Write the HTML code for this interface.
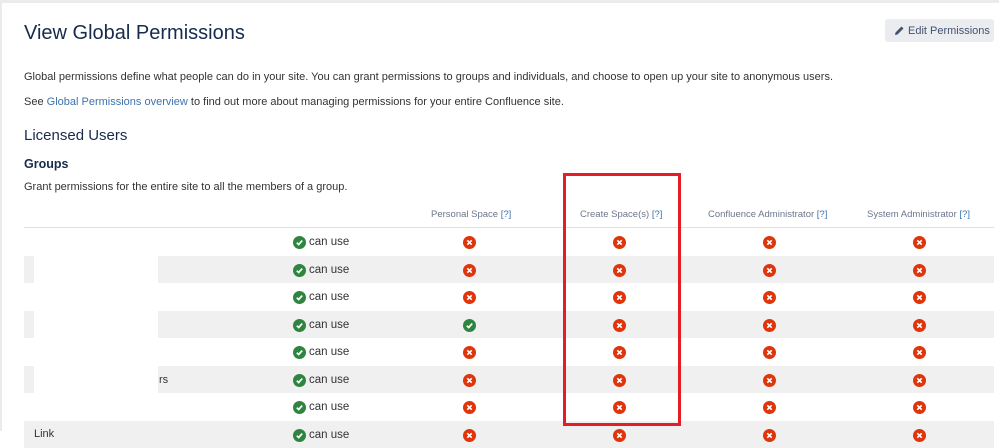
<!DOCTYPE html>
<html><head><style>
body{margin:0;width:999px;height:431px;overflow:hidden;background:#fff;font-family:"Liberation Sans",sans-serif;color:#172b4d;position:relative}
.top{position:absolute;left:0;top:0;width:999px;height:3px;background:#ebebeb}
.left{position:absolute;left:0;top:0;width:2px;height:431px;background:#ebebeb}
.abs{position:absolute;white-space:nowrap}
h1{position:absolute;left:24px;top:22px;margin:0;font-size:20px;font-weight:normal;color:#172b4d;white-space:nowrap}
.p{font-size:11px;color:#333}
a{color:#3b73af;text-decoration:none}
.btn{position:absolute;left:885px;top:19px;width:109px;height:23px;background:#ebecf0;border-radius:3px;font-size:11px;color:#42526e;line-height:23px;white-space:nowrap}
.row{position:absolute;left:24px;width:970px;height:27.5px}
.g{background:#f0f0f0}
.hdr{font-size:9.5px;color:#6b778c;top:209px}
.hdr b{font-weight:normal;color:#3b73af}
.cu{font-size:11.5px;color:#333}
</style></head><body>
<div class="top"></div><div class="left"></div>
<h1>View Global Permissions</h1>
<div class="btn"><svg style="position:absolute;left:9px;top:6px" width="11" height="11" viewBox="0 0 11 11"><path d="M1 10 L1.5 7.5 L7.5 1.5 L9.5 3.5 L3.5 9.5 Z" fill="#42526e"/></svg><span style="position:absolute;left:23px;top:1px;white-space:nowrap">Edit Permissions</span></div>
<div class="abs p" style="left:24px;top:71px">Global permissions define what people can do in your site. You can grant permissions to groups and individuals, and choose to open up your site to anonymous users.</div>
<div class="abs p" style="left:24px;top:96px">See <a>Global Permissions overview</a> to find out more about managing permissions for your entire Confluence site.</div>
<div class="abs" style="left:24px;top:127px;font-size:15px">Licensed Users</div>
<div class="abs" style="left:24px;top:157px;font-size:12.5px;font-weight:bold">Groups</div>
<div class="abs p" style="left:24px;top:181px">Grant permissions for the entire site to all the members of a group.</div>
<div class="abs hdr" style="left:431px">Personal Space <b>[?]</b></div>
<div class="abs hdr" style="left:580px">Create Space(s) <b>[?]</b></div>
<div class="abs hdr" style="left:708px">Confluence Administrator <b>[?]</b></div>
<div class="abs hdr" style="left:867px">System Administrator <b>[?]</b></div>
<div class="abs" style="left:24px;top:227px;width:970px;height:1px;background:#dfe1e6"></div>
<div class="row" style="top:228px"></div>
<div class="row g" style="top:255.5px"></div>
<div class="row" style="top:283px"></div>
<div class="row g" style="top:310.5px"></div>
<div class="row" style="top:338px"></div>
<div class="row g" style="top:365.5px"></div>
<div class="row" style="top:393px"></div>
<div class="row g" style="top:420.5px"></div>
<div class="abs" style="left:34px;top:230px;width:124px;height:191px;background:#fff"></div>
<div class="abs p" style="left:159px;top:374px">rs</div>
<div class="abs p" style="left:34px;top:428px">Link</div>
<div id="ic"></div>
<script>
var ys=[242,270,297,325,352,380,407,435],h='';
function icon(x,y,ok){return '<svg class="abs" style="left:'+(x-6.5)+'px;top:'+(y-6.5)+'px" width="13" height="13" viewBox="0 0 13 13"><circle cx="6.5" cy="6.5" r="6.5" fill="'+(ok?'#2e8540':'#de350b')+'"/>'+(ok?'<path d="M3.8 6.7 L5.7 8.5 L9.2 4.6" stroke="#fff" stroke-width="1.7" fill="none"/>':'<path d="M4.3 4.3 L8.7 8.7 M8.7 4.3 L4.3 8.7" stroke="#fff" stroke-width="1.7"/>')+'</svg>';}
ys.forEach(function(y,i){
 h+=icon(299,y,true)+'<div class="abs cu" style="left:309px;top:'+(y-6)+'px">can use</div>';
 [469,619,769,919].forEach(function(x,j){h+=icon(x,y,i==3&&j==0);});
});
document.getElementById('ic').innerHTML=h;
</script>
<div class="abs" style="left:563px;top:173px;width:112px;height:247px;border:3px solid #e31e24"></div>
</body></html>
